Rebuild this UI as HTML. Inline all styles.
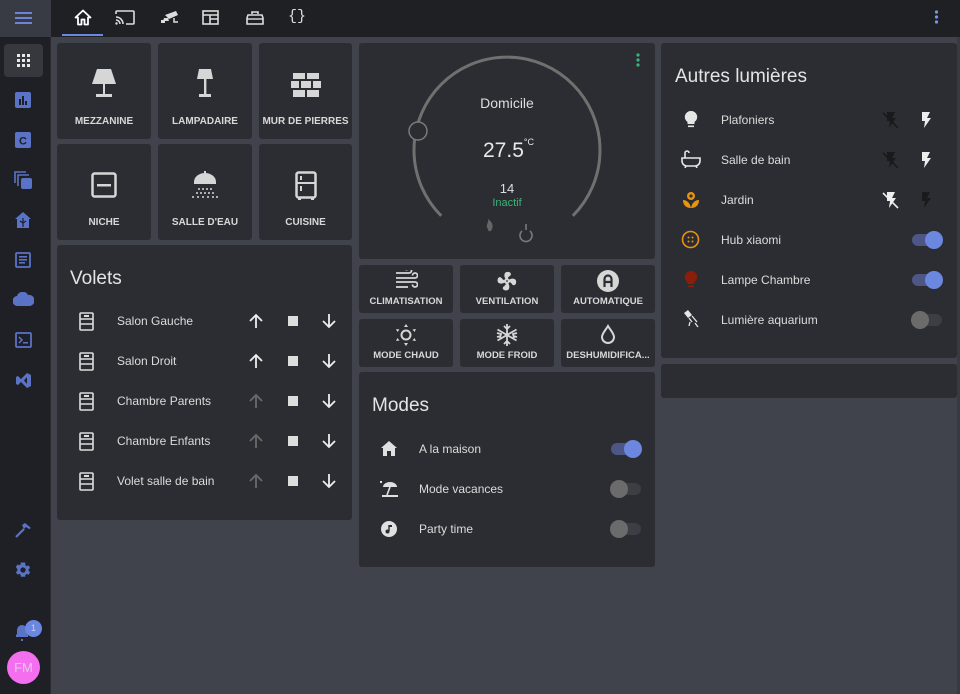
<!DOCTYPE html>
<html><head><meta charset="utf-8"><style>
*{box-sizing:border-box;margin:0;padding:0}
body{width:960px;height:694px;overflow:hidden;background:#40434b;font-family:"Liberation Sans",sans-serif;color:#e1e1e1;position:relative}
.sb{position:absolute;left:0;top:0;width:51px;height:694px;background:#1f2025;border-right:1px solid #2a2b30}
.sbtop{position:absolute;left:0;top:0;width:51px;height:37px;background:#383b43}
.hdr{position:absolute;left:51px;top:0;width:909px;height:37px;background:#1f2024}
.card{position:absolute;background:#2c2d32;border-radius:3px}
.tile{position:absolute;background:#2c2d32;border-radius:3px;text-align:center;font-weight:bold;font-size:10px;color:#d8d8d8}
.tile .lb{position:absolute;left:0;right:0;bottom:12px}
.tile svg{position:absolute;left:50%;transform:translateX(-50%)}
.btn{position:absolute;background:#2c2d32;border-radius:3px;text-align:center;font-weight:bold;font-size:9.5px;color:#d8d8d8;white-space:nowrap}
.btn .lb{position:absolute;left:0;right:0;top:31px}
.btn svg{position:absolute;left:50%;top:5px;transform:translateX(-50%)}
.title{position:absolute;font-size:19px;color:#e4e4e4}
.row{position:absolute;font-size:12px;color:#dcdcdc}
.ic{position:absolute}
.tg{position:absolute;width:30px;height:12px;border-radius:6px}
.tg i{position:absolute;top:-3px;width:18px;height:18px;border-radius:50%}
.on{background:#4d5685}.on i{left:13px;background:#6b87e0}
.off{background:#3d3e43}.off i{left:-1px;background:#6b6b6b}
</style></head><body>
<div class="sb"></div><div class="sbtop"></div>
<svg style="position:absolute;left:15px;top:11px" width="17" height="13"><g fill="#6c85d8"><rect y="1" width="17" height="2"/><rect y="6" width="17" height="2"/><rect y="11" width="17" height="2"/></g></svg>
<div style="position:absolute;left:4px;top:44px;width:39px;height:33px;background:#36383d;border-radius:4px"></div>
<svg style="position:absolute;left:17px;top:54px" width="13" height="13"><g fill="#e8e8e8"><rect x="0" y="0" width="3" height="3"/><rect x="5" y="0" width="3" height="3"/><rect x="10" y="0" width="3" height="3"/><rect x="0" y="5" width="3" height="3"/><rect x="5" y="5" width="3" height="3"/><rect x="10" y="5" width="3" height="3"/><rect x="0" y="10" width="3" height="3"/><rect x="5" y="10" width="3" height="3"/><rect x="10" y="10" width="3" height="3"/></g></svg>
<svg style="position:absolute;left:15px;top:92px" width="16" height="16"><rect width="16" height="16" rx="2" fill="#5b73c7"/><g fill="#1f2025"><rect x="4" y="7" width="2" height="6"/><rect x="7" y="4" width="2" height="9"/><rect x="10" y="9" width="2" height="4"/></g></svg>
<svg style="position:absolute;left:15px;top:132px" width="16" height="16"><rect width="16" height="16" rx="2" fill="#5b73c7"/><text x="8" y="12.5" font-size="11" font-weight="bold" text-anchor="middle" fill="#1f2025" font-family="Liberation Sans">C</text></svg>
<svg style="position:absolute;left:14px;top:171px" width="18" height="18"><g fill="none" stroke="#5b73c7" stroke-width="1.6"><path d="M1 12V1h11"/><path d="M4 15V4h11"/></g><rect x="7" y="7" width="11" height="11" rx="2" fill="#5b73c7"/></svg>
<svg style="position:absolute;left:14px;top:211px" width="18" height="18"><path d="M9 1L1 8h2v9h12V8h2z" fill="#5b73c7"/><g stroke="#1f2025" stroke-width="1.2" fill="none"><path d="M9 7v9M6 10l3 2 3-2"/></g></svg>
<svg style="position:absolute;left:15px;top:252px" width="16" height="16"><rect x="1" y="1" width="14" height="14" rx="1" fill="none" stroke="#5b73c7" stroke-width="1.8"/><g fill="#5b73c7"><rect x="4" y="4" width="8" height="1.6"/><rect x="4" y="7" width="8" height="1.6"/><rect x="4" y="10" width="6" height="1.6"/></g></svg>
<svg style="position:absolute;left:13px;top:292px" width="21" height="14"><path d="M5 14a5 5 0 0 1-1-10 6 6 0 0 1 11-1 5 5 0 0 1 2 11z" fill="#5b73c7"/></svg>
<svg style="position:absolute;left:15px;top:332px" width="17" height="16"><rect x="1" y="1" width="15" height="14" rx="1" fill="none" stroke="#5b73c7" stroke-width="1.8"/><path d="M4 5l3 3-3 3" stroke="#5b73c7" stroke-width="1.5" fill="none"/><rect x="8" y="10" width="5" height="1.5" fill="#5b73c7"/></svg>
<svg style="position:absolute;left:15px;top:372px" width="17" height="17"><path d="M12 1l4 2v11l-4 2-6-6-3 3-2-1V5l2-1 3 3zM12 5l-3 3.5 3 3.5z" fill="#5b73c7" fill-rule="evenodd"/></svg>
<svg style="position:absolute;left:14px;top:521px" width="18" height="18"><path d="M2 16l8-8" stroke="#5b73c7" stroke-width="2.2"/><path d="M8 4l3-2 6 5-2 1-3-2-2 2z" fill="#5b73c7"/></svg>
<svg style="position:absolute;left:14px;top:561px" width="18" height="18" viewBox="0 0 24 24"><path fill="#5b73c7" d="M12 15.5A3.5 3.5 0 1 1 12 8.5a3.5 3.5 0 0 1 0 7m7.4-2.5l.1-1-.1-1 2.1-1.6-2-3.5-2.5 1a7 7 0 0 0-1.7-1L14.9 2H9.1l-.4 2.6a7 7 0 0 0-1.7 1l-2.5-1-2 3.5L4.6 11l-.1 1 .1 1-2.1 1.6 2 3.5 2.5-1a7 7 0 0 0 1.7 1l.4 2.9h5.8l.4-2.6a7 7 0 0 0 1.7-1l2.5 1 2-3.5z"/></svg>
<svg style="position:absolute;left:15px;top:622px" width="14" height="20"><path d="M1 15h12v-2l-1-1V8a5 5 0 0 0-10 0v4L1 13z" fill="#5b73c7"/><rect x="6" y="17" width="2" height="2" fill="#5b73c7"/></svg>
<div style="position:absolute;left:25px;top:620px;width:17px;height:17px;border-radius:50%;background:#6b87e0;font-size:9px;text-align:center;line-height:17px;color:#c8d2f3">1</div>
<div style="position:absolute;left:7px;top:651px;width:33px;height:33px;border-radius:50%;background:#f46ef0;font-size:13px;text-align:center;line-height:33px;color:#e8c8e8">FM</div>

<div class="hdr"></div>
<div style="position:absolute;left:62px;top:34px;width:41px;height:2px;background:#6b87e0"></div>
<svg style="position:absolute;left:74px;top:9px" width="18" height="17"><path d="M9 1.5L1.5 8.5h2.5v7h3.5v-5h3v5h3.5v-7h2.5z" fill="none" stroke="#fff" stroke-width="1.8" stroke-linejoin="round"/></svg>
<svg style="position:absolute;left:115px;top:10px" width="20" height="15"><path d="M1 4V2a1 1 0 0 1 1-1h16a1 1 0 0 1 1 1v11a1 1 0 0 1-1 1h-7" fill="none" stroke="#ddd" stroke-width="1.6"/><path d="M1 7a7 7 0 0 1 7 7M1 10a4 4 0 0 1 4 4" fill="none" stroke="#ddd" stroke-width="1.6"/><circle cx="1.5" cy="13.5" r="1.2" fill="#ddd"/></svg>
<svg style="position:absolute;left:160px;top:11px" width="18" height="13"><path d="M5 4l11-4 2 4-9 4zM4 7h4l1 3H3z M1 9l4 0 0 3H1z" fill="#ddd"/><path d="M14 7v4h4" stroke="#ddd" stroke-width="1.5" fill="none"/></svg>
<svg style="position:absolute;left:202px;top:9px" width="17" height="16"><rect x="1" y="2" width="15" height="13" fill="none" stroke="#ddd" stroke-width="1.6"/><path d="M1 6h15M8 6v9M8 10h8" stroke="#ddd" stroke-width="1.6"/></svg>
<svg style="position:absolute;left:246px;top:10px" width="18" height="15"><path d="M6 4V2h6v2M2 5h14l1 3v6H1V8z" fill="none" stroke="#ddd" stroke-width="1.6"/><path d="M1 9h16" stroke="#ddd" stroke-width="1.4"/></svg>
<div style="position:absolute;left:288px;top:8px;font-size:15px;color:#ddd;font-family:'Liberation Mono',monospace">{}</div>
<svg style="position:absolute;left:934px;top:10px" width="5" height="14"><g fill="#7d95e6"><circle cx="2.5" cy="2" r="1.6"/><circle cx="2.5" cy="7" r="1.6"/><circle cx="2.5" cy="12" r="1.6"/></g></svg>

<!-- tiles -->
<div class="tile" style="left:57px;top:43px;width:94px;height:96px"><svg style="top:26px" width="24" height="30"><path d="M5 0h14l5 15H0z" fill="#d6d6d6"/><rect x="11" y="15" width="2" height="11" fill="#d6d6d6"/><rect x="4" y="25" width="16" height="3" fill="#d6d6d6"/></svg><div class="lb">MEZZANINE</div></div>
<div class="tile" style="left:158px;top:43px;width:94px;height:96px"><svg style="top:26px" width="16" height="30"><path d="M2 0h12l2 10H0z" fill="#d6d6d6"/><rect x="7" y="10" width="2.4" height="16" fill="#d6d6d6"/><rect x="2" y="25" width="12" height="3" fill="#d6d6d6"/></svg><div class="lb">LAMPADAIRE</div></div>
<div class="tile" style="left:259px;top:43px;width:93px;height:96px"><svg style="top:30px" width="30" height="26"><g fill="#d6d6d6"><rect x="2" y="0" width="12" height="6"/><rect x="16" y="0" width="12" height="6"/><rect x="0" y="8" width="8" height="7"/><rect x="10" y="8" width="10" height="7"/><rect x="22" y="8" width="8" height="7"/><rect x="2" y="17" width="12" height="7"/><rect x="16" y="17" width="12" height="7"/></g></svg><div class="lb">MUR DE PIERRES</div></div>
<div class="tile" style="left:57px;top:144px;width:94px;height:96px"><svg style="top:28px" width="26" height="26"><rect x="1.5" y="1.5" width="23" height="23" rx="2" fill="none" stroke="#d6d6d6" stroke-width="2.5"/><rect x="6" y="12" width="14" height="2.5" fill="#d6d6d6"/></svg><div class="lb">NICHE</div></div>
<div class="tile" style="left:158px;top:144px;width:94px;height:96px"><svg style="top:27px" width="28" height="28"><path d="M14 0v3M4 11a10 8 0 0 1 20 0z" stroke="#d6d6d6" stroke-width="2" fill="#d6d6d6"/><rect x="3" y="11" width="22" height="2" fill="#d6d6d6"/><g fill="#d6d6d6"><circle cx="8" cy="18" r="1"/><circle cx="12" cy="18" r="1"/><circle cx="16" cy="18" r="1"/><circle cx="20" cy="18" r="1"/><circle cx="6" cy="22" r="1"/><circle cx="10" cy="22" r="1"/><circle cx="14" cy="22" r="1"/><circle cx="18" cy="22" r="1"/><circle cx="22" cy="22" r="1"/><circle cx="2" cy="26" r="1"/><circle cx="7" cy="26" r="1"/><circle cx="12" cy="26" r="1"/><circle cx="17" cy="26" r="1"/><circle cx="22" cy="26" r="1"/><circle cx="26" cy="26" r="1"/></g></svg><div class="lb">SALLE D'EAU</div></div>
<div class="tile" style="left:259px;top:144px;width:93px;height:96px"><svg style="top:27px" width="22" height="30"><rect x="1.5" y="1.5" width="19" height="25" rx="2" fill="none" stroke="#d6d6d6" stroke-width="2.5"/><rect x="1.5" y="11" width="19" height="2" fill="#d6d6d6"/><rect x="5" y="5" width="2" height="4" fill="#d6d6d6"/><rect x="5" y="15" width="2" height="5" fill="#d6d6d6"/><rect x="3" y="26" width="3" height="3" fill="#d6d6d6"/><rect x="16" y="26" width="3" height="3" fill="#d6d6d6"/></svg><div class="lb">CUISINE</div></div>

<!-- volets -->
<div class="card" style="left:57px;top:245px;width:295px;height:275px"></div>
<div class="title" style="left:70px;top:268px">Volets</div>
<div id="vol"></div>

<!-- thermostat -->
<div class="card" style="left:359px;top:43px;width:296px;height:216px">
<svg style="position:absolute;left:0;top:0" width="296" height="216"><path d="M82.2 172.8A93 93 0 1 1 213.8 172.8" fill="none" stroke="#707070" stroke-width="3"/><circle cx="59" cy="88" r="9" fill="#2c2d32" stroke="#7a7a7a" stroke-width="1.5"/><g fill="#3bb37a"><circle cx="279" cy="12" r="1.6"/><circle cx="279" cy="17" r="1.6"/><circle cx="279" cy="22" r="1.6"/></g>
<path d="M129 186c-3-4 1-6 0-10 3 2 6 6 4 10-1 3-4 3-4 0z" fill="#666"/><path d="M163 188a6 6 0 1 0 8 0M167 181v6" fill="none" stroke="#7a7a7a" stroke-width="1.6"/></svg>
<div style="position:absolute;left:0;right:0;top:52px;text-align:center;font-size:14px;color:#ddd">Domicile</div>
<div style="position:absolute;left:124px;top:96px;font-size:21px;color:#e8e8e8">27.5<span style="font-size:9px;vertical-align:top;position:relative;top:-2px">°C</span></div>
<div style="position:absolute;left:0;right:0;top:138px;text-align:center;font-size:13px;color:#ddd">14</div>
<div style="position:absolute;left:0;right:0;top:154px;text-align:center;font-size:11px;color:#3bb37a">Inactif</div>
</div>
<div class="btn" style="left:359px;top:265px;width:94px;height:48px"><svg width="24" height="20"><g fill="none" stroke="#d6d6d6" stroke-width="1.8"><path d="M2 3h13a2.5 2.5 0 1 0-2.5-2.5"/><path d="M2 8h19a2.5 2.5 0 1 0-2.5-2.5"/><path d="M2 12h19a2.5 2.5 0 1 1-2.5 2.5"/><path d="M2 17h12"/></g></svg><div class="lb">CLIMATISATION</div></div>
<div class="btn" style="left:460px;top:265px;width:94px;height:48px"><svg width="24" height="22" viewBox="0 0 24 24"><path fill="#d6d6d6" d="M12 11a1 1 0 1 0 0 2 1 1 0 0 0 0-2m.5-9c4.5 0 4.6 3.6 2.3 4.7a3.9 3.9 0 0 0-1.9 2.5c.6.3 1.1.7 1.4 1.3 3.7-2 7.7-1.2 7.7 2.3 0 4.5-3.6 4.6-4.7 2.3a3.9 3.9 0 0 0-2.5-1.9c-.3.6-.7 1.1-1.3 1.4 2 3.7 1.2 7.7-2.3 7.7-4.5 0-4.6-3.6-2.3-4.7a4 4 0 0 0 1.9-2.5c-.6-.3-1.1-.7-1.4-1.3-3.7 2-7.7 1.2-7.7-2.3 0-4.5 3.6-4.6 4.7-2.3a3.9 3.9 0 0 0 2.5 1.9c.3-.6.7-1.1 1.3-1.4-2-3.7-1.2-7.7 2.3-7.7z"/></svg><div class="lb">VENTILATION</div></div>
<div class="btn" style="left:561px;top:265px;width:94px;height:48px"><svg width="24" height="22"><circle cx="12" cy="11" r="11" fill="#d6d6d6"/><path d="M8.5 17V9a3.5 3.5 0 0 1 7 0v8M8.5 12h7" fill="none" stroke="#2c2d32" stroke-width="2.2"/></svg><div class="lb">AUTOMATIQUE</div></div>
<div class="btn" style="left:359px;top:319px;width:94px;height:48px"><svg width="24" height="22"><circle cx="12" cy="11" r="4.5" fill="none" stroke="#d6d6d6" stroke-width="2"/><g fill="#d6d6d6"><path d="M12 0l2 3h-4zM12 22l2-3h-4zM2 5l3.5.5-2 2.5zM22 5l-3.5.5 2 2.5zM2 17l3.5-.5-2-2.5zM22 17l-3.5-.5 2-2.5z"/></g></svg><div class="lb">MODE CHAUD</div></div>
<div class="btn" style="left:460px;top:319px;width:94px;height:48px"><svg width="24" height="22"><g stroke="#d6d6d6" stroke-width="1.8" fill="none"><path d="M12 0v22M2.5 5.5l19 11M2.5 16.5l19-11M9 2l3 3 3-3M9 20l3-3 3 3M2 9l4 1-1 4M22 9l-4 1 1 4M2 13l4-1M22 13l-4-1"/></g></svg><div class="lb">MODE FROID</div></div>
<div class="btn" style="left:561px;top:319px;width:94px;height:48px"><svg width="20" height="22"><path d="M10 2c-2 3.5-6 7.5-6 11a6 6 0 0 0 12 0c0-3.5-4-7.5-6-11z" fill="none" stroke="#d6d6d6" stroke-width="2"/></svg><div class="lb">DESHUMIDIFICA...</div></div>

<!-- modes -->
<div class="card" style="left:359px;top:372px;width:296px;height:195px"></div>
<div class="title" style="left:372px;top:395px">Modes</div>
<svg class="ic" style="left:381px;top:441px" width="16" height="15"><path d="M8 0L0 7h2v8h4v-5h4v5h4V7h2z" fill="#e0e0e0"/></svg>
<div class="row" style="left:419px;top:442px">A la maison</div>
<div class="tg on" style="left:611px;top:443px"><i></i></div>
<svg class="ic" style="left:379px;top:480px" width="20" height="18"><path d="M4 7a7 5 0 0 1 14 0z" fill="#e0e0e0"/><path d="M11 7l-3 8" stroke="#e0e0e0" stroke-width="1.6"/><rect x="3" y="15" width="16" height="2" fill="#e0e0e0"/><rect x="1" y="1" width="2" height="2" fill="#e0e0e0"/></svg>
<div class="row" style="left:419px;top:482px">Mode vacances</div>
<div class="tg off" style="left:611px;top:483px"><i></i></div>
<svg class="ic" style="left:380px;top:520px" width="18" height="18"><circle cx="9" cy="9" r="8" fill="#e0e0e0"/><path d="M9 5v6" stroke="#2c2d32" stroke-width="1.4"/><circle cx="7.5" cy="11.5" r="2" fill="#2c2d32"/><path d="M9 5h3v2H9z" fill="#2c2d32"/></svg>
<div class="row" style="left:419px;top:522px">Party time</div>
<div class="tg off" style="left:611px;top:523px"><i></i></div>

<!-- autres lumieres -->
<div class="card" style="left:661px;top:43px;width:296px;height:315px"></div>
<div class="card" style="left:661px;top:364px;width:296px;height:34px"></div>
<div class="title" style="left:675px;top:66px">Autres lumières</div>
<svg class="ic" style="left:684px;top:111px" width="14" height="18"><path d="M7 0a6 6 0 0 0-3.5 11v2h7v-2A6 6 0 0 0 7 0z" fill="#e6e6e6"/><rect x="4" y="14.5" width="6" height="1.6" fill="#e6e6e6"/></svg>
<div class="row" style="left:721px;top:113px">Plafoniers</div>
<svg class="ic" style="left:681px;top:150px" width="20" height="18"><path d="M1 8h18v3a5 5 0 0 1-5 5H6a5 5 0 0 1-5-5z" fill="none" stroke="#e6e6e6" stroke-width="1.6"/><path d="M4 8V3a2 2 0 0 1 4 0" fill="none" stroke="#e6e6e6" stroke-width="1.6"/><path d="M5 16l-1 2M15 16l1 2" stroke="#e6e6e6" stroke-width="1.6"/></svg>
<div class="row" style="left:721px;top:153px">Salle de bain</div>
<svg class="ic" style="left:682px;top:190px" width="18" height="18"><circle cx="9" cy="6" r="4" fill="#e8940f"/><circle cx="9" cy="6" r="1.6" fill="#2c2d32"/><path d="M1 10c4 0 7 3 8 8-5 0-8-3-8-8zM17 10c-4 0-7 3-8 8 5 0 8-3 8-8z" fill="#e8940f"/></svg>
<div class="row" style="left:721px;top:193px">Jardin</div>
<svg class="ic" style="left:681px;top:230px" width="19" height="19"><circle cx="9.5" cy="9.5" r="8" fill="none" stroke="#e8940f" stroke-width="1.6"/><g fill="#e8940f"><circle cx="7.5" cy="7.5" r="1"/><circle cx="11.5" cy="7.5" r="1"/><circle cx="7.5" cy="11.5" r="1"/><circle cx="11.5" cy="11.5" r="1"/></g></svg>
<div class="row" style="left:721px;top:233px">Hub xiaomi</div>
<div class="tg on" style="left:912px;top:234px"><i></i></div>
<svg class="ic" style="left:684px;top:271px" width="14" height="18"><path d="M7 0a6 6 0 0 0-3.5 11v2h7v-2A6 6 0 0 0 7 0z" fill="#8a1e0a"/><rect x="4" y="14.5" width="6" height="1.6" fill="#8a1e0a"/></svg>
<div class="row" style="left:721px;top:273px">Lampe Chambre</div>
<div class="tg on" style="left:912px;top:274px"><i></i></div>
<svg class="ic" style="left:682px;top:310px" width="18" height="18"><path d="M2 3l4-3 4 5-4 3z" fill="#e6e6e6"/><path d="M7 8l3 4M10 6l5 6M13 13l3 4M8 12l-1 4" stroke="#e6e6e6" stroke-width="1.3"/></svg>
<div class="row" style="left:721px;top:313px">Lumière aquarium</div>
<div class="tg off" style="left:912px;top:314px"><i></i></div>
<div id="flash"></div>
<div style="position:absolute;left:957px;top:37px;width:3px;height:657px;background:#383a40"></div>

<script>
var v=["Salon Gauche","Salon Droit","Chambre Parents","Chambre Enfants","Volet salle de bain"],h="";
v.forEach(function(n,i){var y=313+i*40,up=i<2?"#eee":"#6a6a6a";
h+='<svg class="ic" style="left:79px;top:'+(y-1)+'px" width="15" height="19"><rect x="1" y="1" width="13" height="17" rx="1" fill="none" stroke="#ddd" stroke-width="1.6"/><path d="M1 7h13M1 12h13" stroke="#ddd" stroke-width="1.4"/><rect x="5" y="3" width="5" height="2" fill="#ddd"/></svg>';
h+='<div class="row" style="left:117px;top:'+(y+1)+'px">'+n+'</div>';
h+='<svg class="ic" style="left:249px;top:'+y+'px" width="14" height="16"><path d="M7 15V2M1 8l6-6 6 6" fill="none" stroke="'+up+'" stroke-width="1.8"/></svg>';
h+='<div style="position:absolute;left:288px;top:'+(y+3)+'px;width:10px;height:10px;background:#ddd"></div>';
h+='<svg class="ic" style="left:322px;top:'+y+'px" width="14" height="16"><path d="M7 1v13M1 8l6 6 6-6" fill="none" stroke="#eee" stroke-width="1.8"/></svg>';});
document.getElementById("vol").innerHTML=h;
var f="",c=[["#1a1a1c","#eee"],["#1a1a1c","#eee"],["#eee","#1a1a1c"]];
c.forEach(function(p,i){var y=111+i*40;
f+='<svg class="ic" style="left:881px;top:'+y+'px" width="18" height="18"><path d="M6 1h8l-3 6h4l-7 10 1-7H6z" fill="'+p[0]+'"/><path d="M2 2l15 15" stroke="'+p[0]+'" stroke-width="1.6"/></svg>';
f+='<svg class="ic" style="left:918px;top:'+y+'px" width="16" height="18"><path d="M4 1h8l-3 6h4l-7 10 1-7H4z" fill="'+p[1]+'"/></svg>';});
document.getElementById("flash").innerHTML=f;
</script>
</body></html>
